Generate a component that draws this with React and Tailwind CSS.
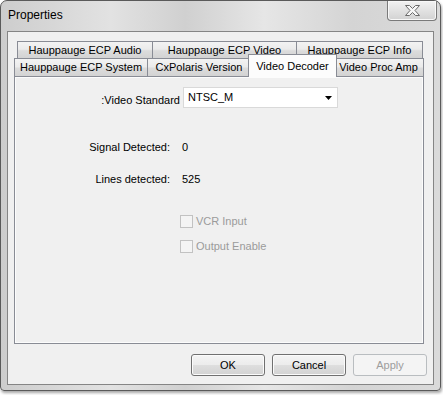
import React from "react";

const font = "font-['Liberation_Sans',Arial,sans-serif]";

function Tab({ label, w, first, cls = "" }) {
  return (
    <div
      className={`flex h-full items-center justify-center border border-b-0 border-[#898c95] bg-[linear-gradient(180deg,#f3f3f3_0%,#ebebeb_45%,#dcdcdc_55%,#d3d3d3_100%)] text-[11px] leading-[13px] text-black ${first ? "" : "-ml-px"} ${cls}`}
      style={{ width: w }}
    >
      {label}
    </div>
  );
}

function CheckRow({ label, cls }) {
  return (
    <div className={`flex h-[13px] items-center ${cls}`}>
      <div className="ml-[165px] h-[13px] w-[13px] border border-[#c2c2c2] bg-[#f4f4f4]" />
      <span className="ml-[3px] text-[11px] leading-[13px] text-[#9b9b9b]">{label}</span>
    </div>
  );
}

function Button({ children, disabled }) {
  return (
    <div
      className={
        disabled
          ? "flex h-[22px] w-[74px] items-center justify-center rounded-[3px] border border-[#b9bdc0] bg-[#f4f4f4] text-[11px] text-[#9d9d9d]"
          : "flex h-[22px] w-[74px] items-center justify-center rounded-[3px] border border-[#707070] bg-[linear-gradient(180deg,#f4f4f4_0%,#ececec_48%,#dedede_52%,#d2d2d2_100%)] text-[11px] text-black shadow-[inset_0_0_0_1px_#fbfbfb]"
      }
    >
      {children}
    </div>
  );
}

export default function App() {
  return (
    <div className={`h-[395px] w-[443px] bg-white ${font}`}>
      <div className="flex h-[391px] w-[441px] flex-col rounded-t-[7px] rounded-b-[4px] border border-[#5a5a5a] bg-[linear-gradient(90deg,#cdcdcd_0%,#e2e2e2_25%,#d0d0d0_42%,#e6e6e6_60%,#d4d4d4_80%,#dadada_100%)] shadow-[1px_2px_3px_rgba(0,0,0,0.35)]">
        <div className="flex h-[30px] items-start justify-between">
          <div className="ml-[7px] mt-[7px] text-[12px] leading-[15px] text-black">Properties</div>
          <div className="mr-[3px] flex h-[20px] w-[50px] items-center justify-center rounded-b-[4px] border border-t-0 border-[#7a7a7a] bg-[linear-gradient(180deg,#f2f2f2_0%,#e2e2e2_50%,#d2d2d2_100%)] shadow-[inset_0_0_0_1px_#f8f8f8]">
            <svg width="15" height="11" viewBox="-0.5 -0.5 15 11">
              <path
                d="M0 0 H4 L7 3 L10 0 H14 L9.5 5 L14 10 H10 L7 7 L4 10 H0 L4.5 5 Z"
                fill="#f7f7f7"
                stroke="#6a6a6a"
                strokeWidth="1"
                strokeLinejoin="round"
              />
            </svg>
          </div>
        </div>
        <div className="mx-[6px] flex h-[354px] flex-col border border-[#858585] bg-[#f0f0f0] pl-[6px] pt-[9px]">
          {/* tab row 1 */}
          <div className="ml-[3px] flex h-[17px]">
            <Tab label="Hauppauge ECP Audio" w={136} first />
            <Tab label="Hauppauge ECP Video" w={145} />
            <Tab label="Hauppauge ECP Info" w={127} />
          </div>
          {/* tab row 2 */}
          <div className="flex h-[18px] items-end">
            <Tab label="Hauppauge ECP System" w={134} first cls="h-[18px]" />
            <Tab label="CxPolaris Version" w={104} cls="h-[18px]" />
            <div className="relative z-10 -mb-px -ml-[3px] -mr-[3px] flex h-[23px] w-[89px] items-start justify-center border border-b-0 border-[#898c95] bg-[#fcfcfc] pt-[5px] text-[11px] leading-[13px] text-black">
              Video Decoder
            </div>
            <Tab label="Video Proc Amp" w={91} cls="h-[18px]" />
          </div>
          {/* panel */}
          <div className="flex h-[268px] w-[410px] flex-col border border-[#898c95] bg-[#f0f0f0] shadow-[inset_0_0_0_1px_#fcfcfc]">
            <div className="mt-[10px] flex h-[21px] items-center">
              <div className="mt-[5px] w-[165px] text-right text-[11px] leading-[13px] text-black">:Video Standard</div>
              <div className="ml-[3px] flex h-[21px] w-[155px] items-center justify-between border border-[#d9d9d9] bg-white pl-[4px] pr-[3px]">
                <span className="text-[11px] leading-[13px] text-black">NTSC_M</span>
                <svg width="7" height="4" viewBox="0 0 7 4" className="mr-[2px] mt-[1px]">
                  <path d="M0 0 H7 L3.5 4 Z" fill="#000" />
                </svg>
              </div>
            </div>
            <div className="mt-[33px] flex h-[13px] items-center text-[11px] leading-[13px] text-black">
              <div className="w-[155px] text-right">Signal Detected:</div>
              <div className="ml-[12px]">0</div>
            </div>
            <div className="mt-[19px] flex h-[13px] items-center text-[11px] leading-[13px] text-black">
              <div className="w-[155px] text-right">Lines detected:</div>
              <div className="ml-[12px]">525</div>
            </div>
            <CheckRow label="VCR Input" cls="mt-[29px]" />
            <CheckRow label="Output Enable" cls="mt-[12px]" />
          </div>
          {/* buttons */}
          <div className="mt-[10px] flex gap-[7px] pl-[177px]">
            <Button>OK</Button>
            <Button>Cancel</Button>
            <Button disabled>Apply</Button>
          </div>
        </div>
      </div>
    </div>
  );
}
